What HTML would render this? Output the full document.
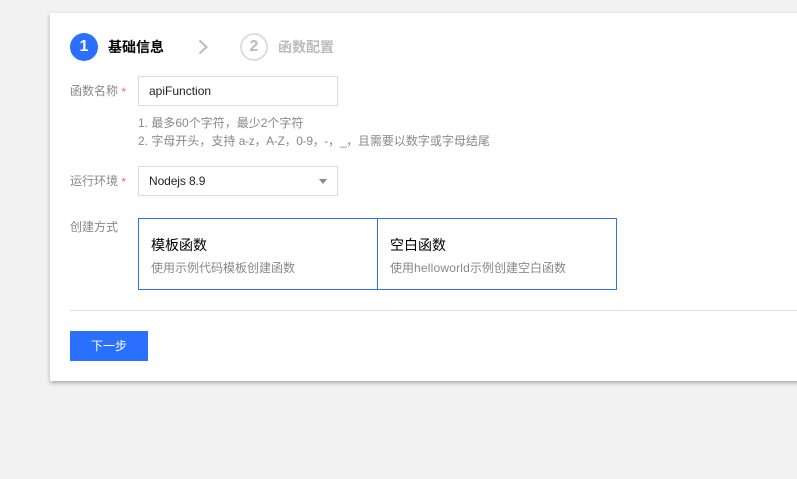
<!DOCTYPE html>
<html lang="zh-CN">
<head>
<meta charset="utf-8">
<style>
html,body{margin:0;padding:0;width:797px;height:479px;overflow:hidden;background:#f2f2f2;font-family:"Liberation Sans","Noto Sans CJK SC",sans-serif;font-size:12px;color:#888;}
.card{position:absolute;left:50px;top:13px;width:760px;height:368px;background:#fff;box-shadow:0 2px 4px rgba(0,0,0,.3);}
.a{position:absolute;white-space:nowrap;line-height:18px;}
.circle{position:absolute;width:28px;height:28px;border-radius:50%;box-sizing:border-box;text-align:center;font-weight:bold;font-size:16px;line-height:28px;}
.box{position:absolute;box-sizing:border-box;border:1px solid #ddd;background:#fff;color:#000;padding-left:10px;line-height:28px;height:30px;width:200px;left:138px;}
.star{color:#e86a6a;position:relative;top:1px;}
</style>
</head>
<body>
<div class="card"></div>
<div class="circle" style="left:70px;top:33px;background:#2b6fff;color:#fff;">1</div>
<div class="a" style="left:108px;top:38px;font-size:14px;font-weight:bold;color:#000;">基础信息</div>
<svg style="position:absolute;left:196px;top:38px" width="16" height="18" viewBox="0 0 16 18"><path d="M3.5 2.5L10.5 9L3.5 15.5" fill="none" stroke="#bbb" stroke-width="2"/></svg>
<div class="circle" style="left:240px;top:33px;border:2px solid #ddd;color:#bbb;line-height:24px;">2</div>
<div class="a" style="left:278px;top:38px;font-size:14px;font-weight:bold;color:#bbb;">函数配置</div>

<div class="a" style="left:70px;top:82px;">函数名称 <span class="star">*</span></div>
<div class="box" style="top:76px;color:#222;">apiFunction</div>
<div class="a" style="left:138px;top:114px;">1. 最多60个字符，最少2个字符</div>
<div class="a" style="left:138px;top:132px;">2. 字母开头，支持 <span style="letter-spacing:-.3px">a-z，A-Z，0-9，-，_，</span>且需要以数字或字母结尾</div>

<div class="a" style="left:70px;top:172px;">运行环境 <span class="star">*</span></div>
<div class="box" style="top:166px;color:#222;letter-spacing:-.1px;">Nodejs 8.9</div>
<div style="position:absolute;left:319px;top:179px;width:0;height:0;border-left:4.5px solid transparent;border-right:4.5px solid transparent;border-top:5px solid #888;"></div>

<div class="a" style="left:70px;top:218px;">创建方式</div>
<div style="position:absolute;left:138px;top:218px;width:479px;height:72px;box-sizing:border-box;border:1px solid #2b6fff;"></div>
<div style="position:absolute;left:377px;top:218px;width:1px;height:72px;background:#2b6fff;"></div>
<div class="a" style="left:151px;top:235px;font-size:14px;line-height:20px;color:#000;">模板函数</div>
<div class="a" style="left:151px;top:259px;">使用示例代码模板创建函数</div>
<div class="a" style="left:390px;top:235px;font-size:14px;line-height:20px;color:#000;">空白函数</div>
<div class="a" style="left:390px;top:259px;">使用<span style="letter-spacing:.2px">helloworld</span>示例创建空白函数</div>

<div style="position:absolute;left:70px;top:310px;width:727px;height:1px;background:#e0e0e0;"></div>
<div style="position:absolute;left:70px;top:331px;width:78px;height:30px;background:#2b6fff;color:#fff;text-align:center;line-height:30px;">下一步</div>
</body>
</html>
